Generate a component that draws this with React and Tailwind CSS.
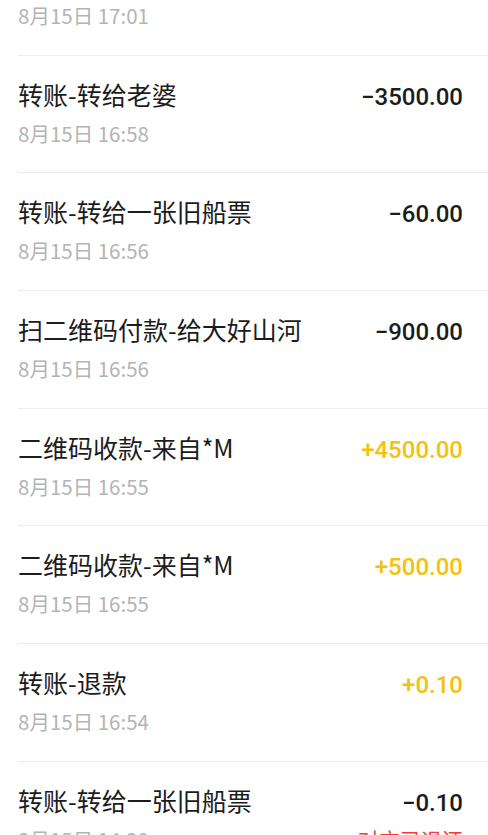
import React from "react";

const rows = [
  { title: "转账-转给老婆", amount: "−3500.00", date: "8月15日 16:58", income: false },
  { title: "转账-转给一张旧船票", amount: "−60.00", date: "8月15日 16:56", income: false },
  { title: "扫二维码付款-给大好山河", amount: "−900.00", date: "8月15日 16:56", income: false },
  { title: "二维码收款-来自*M", amount: "+4500.00", date: "8月15日 16:55", income: true },
  { title: "二维码收款-来自*M", amount: "+500.00", date: "8月15日 16:55", income: true },
  { title: "转账-退款", amount: "+0.10", date: "8月15日 16:54", income: true },
  { title: "转账-转给一张旧船票", amount: "−0.10", date: "8月15日 14:20", income: false, note: "对方已退还" },
];

const cjk = { fontFamily: '"Noto Sans CJK SC", "Noto Sans", sans-serif' };
const num = { fontFamily: 'Roboto, "Noto Sans", sans-serif' };

export default function App() {
  return (
    <div className="w-[488px] h-[835px] overflow-hidden bg-white" style={cjk}>
      <div className="ml-[18px] h-[55.67px] border-b border-[#ececec] pt-[1px]">
        <div className="text-[20.5px] leading-[28px] text-[#b4b4b4]">8月15日 17:01</div>
      </div>
      {rows.map((r, i) => (
        <div
          key={i}
          className="ml-[18px] h-[117.67px] border-b border-[#ececec] pr-[25px] pt-[22px] flex flex-col gap-[8px]"
        >
          <div className="flex justify-between items-center h-[33px]">
            <span className="text-[25px] leading-[33px] text-[#1c1c1c]">{r.title}</span>
            <span
              className={`text-[24px] leading-[33px] font-medium mt-[6px] ${r.income ? "text-[#f4c10d]" : "text-[#1c1c1c]"}`}
              style={num}
            >
              {r.amount}
            </span>
          </div>
          <div className="flex justify-between items-center h-[28px]">
            <span className="text-[20.5px] leading-[28px] text-[#b4b4b4]">{r.date}</span>
            {r.note && <span className="text-[21px] leading-[28px] text-[#f23b3b]">{r.note}</span>}
          </div>
        </div>
      ))}
    </div>
  );
}
